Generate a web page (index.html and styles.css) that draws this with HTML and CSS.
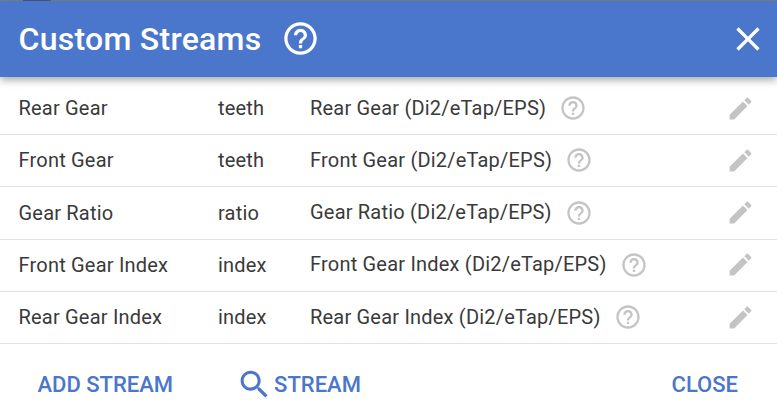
FILE: index.html
```html
<!DOCTYPE html>
<html lang="en">
<head>
  <meta charset="UTF-8">
  <title>Custom Streams</title>
  <link rel="stylesheet" href="styles.css">
</head>
<body>
  <div class="backdrop"><span class="backdrop-tab"></span></div>
  <div class="dialog">
    <header class="title-bar">
      <h1>Custom Streams</h1>
      <svg class="title-help" viewBox="0 0 24 24"><path d="M11 18h2v-2h-2v2zm1-16C6.48 2 2 6.48 2 12s4.48 10 10 10 10-4.48 10-10S17.52 2 12 2zm0 18c-4.41 0-8-3.59-8-8s3.59-8 8-8 8 3.59 8 8-3.59 8-8 8zm0-14c-2.21 0-4 1.79-4 4h2c0-1.1.9-2 2-2s2 .9 2 2c0 2-3 1.75-3 5h2c0-2.25 3-2.5 3-5 0-2.21-1.79-4-4-4z"/></svg>
      <svg class="title-close" viewBox="0 0 24 24"><path d="M19 6.41L17.59 5 12 10.59 6.41 5 5 6.41 10.59 12 5 17.59 6.41 19 12 13.41 17.59 19 19 17.59 13.41 12z"/></svg>
    </header>
    <div class="streams">
      <div class="row">
        <span>Rear Gear</span>
        <span>teeth</span>
        <span class="desc">
          <span class="desc-text">Rear Gear (Di2/eTap/EPS)</span>
          <svg class="help" viewBox="0 0 24 24"><path d="M11 18h2v-2h-2v2zm1-16C6.48 2 2 6.48 2 12s4.48 10 10 10 10-4.48 10-10S17.52 2 12 2zm0 18c-4.41 0-8-3.59-8-8s3.59-8 8-8 8 3.59 8 8-3.59 8-8 8zm0-14c-2.21 0-4 1.79-4 4h2c0-1.1.9-2 2-2s2 .9 2 2c0 2-3 1.75-3 5h2c0-2.25 3-2.5 3-5 0-2.21-1.79-4-4-4z"/></svg>
        </span>
        <svg class="edit" viewBox="0 0 24 24"><path d="M3 17.25V21h3.75L17.81 9.94l-3.75-3.75L3 17.25zM20.71 7.04c.39-.39.39-1.02 0-1.41l-2.34-2.34c-.39-.39-1.02-.39-1.41 0l-1.83 1.83 3.75 3.75 1.83-1.83z"/></svg>
      </div>
      <div class="row">
        <span>Front Gear</span>
        <span>teeth</span>
        <span class="desc">
          <span class="desc-text">Front Gear (Di2/eTap/EPS)</span>
          <svg class="help" viewBox="0 0 24 24"><path d="M11 18h2v-2h-2v2zm1-16C6.48 2 2 6.48 2 12s4.48 10 10 10 10-4.48 10-10S17.52 2 12 2zm0 18c-4.41 0-8-3.59-8-8s3.59-8 8-8 8 3.59 8 8-3.59 8-8 8zm0-14c-2.21 0-4 1.79-4 4h2c0-1.1.9-2 2-2s2 .9 2 2c0 2-3 1.75-3 5h2c0-2.25 3-2.5 3-5 0-2.21-1.79-4-4-4z"/></svg>
        </span>
        <svg class="edit" viewBox="0 0 24 24"><path d="M3 17.25V21h3.75L17.81 9.94l-3.75-3.75L3 17.25zM20.71 7.04c.39-.39.39-1.02 0-1.41l-2.34-2.34c-.39-.39-1.02-.39-1.41 0l-1.83 1.83 3.75 3.75 1.83-1.83z"/></svg>
      </div>
      <div class="row">
        <span>Gear Ratio</span>
        <span>ratio</span>
        <span class="desc">
          <span class="desc-text">Gear Ratio (Di2/eTap/EPS)</span>
          <svg class="help" viewBox="0 0 24 24"><path d="M11 18h2v-2h-2v2zm1-16C6.48 2 2 6.48 2 12s4.48 10 10 10 10-4.48 10-10S17.52 2 12 2zm0 18c-4.41 0-8-3.59-8-8s3.59-8 8-8 8 3.59 8 8-3.59 8-8 8zm0-14c-2.21 0-4 1.79-4 4h2c0-1.1.9-2 2-2s2 .9 2 2c0 2-3 1.75-3 5h2c0-2.25 3-2.5 3-5 0-2.21-1.79-4-4-4z"/></svg>
        </span>
        <svg class="edit" viewBox="0 0 24 24"><path d="M3 17.25V21h3.75L17.81 9.94l-3.75-3.75L3 17.25zM20.71 7.04c.39-.39.39-1.02 0-1.41l-2.34-2.34c-.39-.39-1.02-.39-1.41 0l-1.83 1.83 3.75 3.75 1.83-1.83z"/></svg>
      </div>
      <div class="row">
        <span>Front Gear Index</span>
        <span>index</span>
        <span class="desc">
          <span class="desc-text">Front Gear Index (Di2/eTap/EPS)</span>
          <svg class="help" viewBox="0 0 24 24"><path d="M11 18h2v-2h-2v2zm1-16C6.48 2 2 6.48 2 12s4.48 10 10 10 10-4.48 10-10S17.52 2 12 2zm0 18c-4.41 0-8-3.59-8-8s3.59-8 8-8 8 3.59 8 8-3.59 8-8 8zm0-14c-2.21 0-4 1.79-4 4h2c0-1.1.9-2 2-2s2 .9 2 2c0 2-3 1.75-3 5h2c0-2.25 3-2.5 3-5 0-2.21-1.79-4-4-4z"/></svg>
        </span>
        <svg class="edit" viewBox="0 0 24 24"><path d="M3 17.25V21h3.75L17.81 9.94l-3.75-3.75L3 17.25zM20.71 7.04c.39-.39.39-1.02 0-1.41l-2.34-2.34c-.39-.39-1.02-.39-1.41 0l-1.83 1.83 3.75 3.75 1.83-1.83z"/></svg>
      </div>
      <div class="row">
        <span>Rear Gear Index</span>
        <span>index</span>
        <span class="desc">
          <span class="desc-text">Rear Gear Index (Di2/eTap/EPS)</span>
          <svg class="help" viewBox="0 0 24 24"><path d="M11 18h2v-2h-2v2zm1-16C6.48 2 2 6.48 2 12s4.48 10 10 10 10-4.48 10-10S17.52 2 12 2zm0 18c-4.41 0-8-3.59-8-8s3.59-8 8-8 8 3.59 8 8-3.59 8-8 8zm0-14c-2.21 0-4 1.79-4 4h2c0-1.1.9-2 2-2s2 .9 2 2c0 2-3 1.75-3 5h2c0-2.25 3-2.5 3-5 0-2.21-1.79-4-4-4z"/></svg>
        </span>
        <svg class="edit" viewBox="0 0 24 24"><path d="M3 17.25V21h3.75L17.81 9.94l-3.75-3.75L3 17.25zM20.71 7.04c.39-.39.39-1.02 0-1.41l-2.34-2.34c-.39-.39-1.02-.39-1.41 0l-1.83 1.83 3.75 3.75 1.83-1.83z"/></svg>
      </div>
    </div>
    <footer class="actions">
      <a class="action add">ADD STREAM</a>
      <a class="action search">
        <svg viewBox="0 0 24 24"><path d="M15.5 14h-.79l-.28-.27C15.41 12.59 16 11.11 16 9.5 16 5.91 13.09 3 9.5 3S3 5.91 3 9.5 5.91 16 9.5 16c1.61 0 3.09-.59 4.23-1.57l.27.28v.79l5 4.99L20.49 19l-4.99-5zm-6 0C7.01 14 5 11.99 5 9.5S7.01 5 9.5 5 14 7.01 14 9.5 11.99 14 9.5 14z"/></svg>
        STREAM
      </a>
      <a class="action close">CLOSE</a>
    </footer>
  </div>
</body>
</html>
```

FILE: styles.css
```css
* {
  margin: 0;
  padding: 0;
  box-sizing: border-box;
}
body {
  font-family: Roboto, 'Liberation Sans', sans-serif;
  background: #fff;
  color: #3a3a3a;
  width: 777px;
  height: 420px;
  overflow: hidden;
}
.backdrop {
  height: 1px;
  background: #808080;
  padding-left: 23px;
  display: flex;
}
.backdrop-tab {
  width: 28px;
  background: #4a5a80;
}
.title-bar {
  position: relative;
  height: 76px;
  background: #4a76cb;
  color: #fff;
  display: flex;
  align-items: center;
  padding-left: 18.5px;
  box-shadow: 0 3px 8px rgba(0, 0, 0, 0.35);
}
.title-bar h1 {
  font-size: 32px;
  font-weight: 500;
  letter-spacing: 0.27px;
  margin-bottom: 1px;
}
.title-help {
  width: 39px;
  height: 39px;
  fill: #fff;
  margin-left: 19px;
  margin-bottom: 1px;
}
.title-close {
  width: 40px;
  height: 40px;
  fill: #fff;
  margin-left: auto;
  margin-right: 9px;
  margin-bottom: 1px;
}
.streams {
  padding-top: 5.9px;
}
.row {
  display: grid;
  grid-template-columns: 199.5px 92px 1fr 29px;
  align-items: center;
  height: 52.25px;
  padding: 0 22px 1px 18.5px;
  border-bottom: 1px solid #e0e0e0;
  font-size: 20px;
  letter-spacing: 0.2px;
}
.desc {
  display: flex;
  align-items: center;
  gap: 13px;
}
.desc-text {
  margin-bottom: 1px;
}
.help {
  width: 28px;
  height: 28px;
  fill: #c4c4c4;
}
.edit {
  width: 29px;
  height: 29px;
  fill: #c4c4c4;
}
.actions {
  display: flex;
  align-items: center;
  height: 76px;
  padding: 5px 39px 0 37.5px;
  font-size: 22px;
  font-weight: 500;
  color: #4a76cb;
}
.action {
  display: flex;
  align-items: center;
}
.search {
  margin-left: 63px;
}
.search svg {
  width: 37px;
  height: 37px;
  fill: #4a76cb;
  margin-right: 1px;
}
.close {
  margin-left: auto;
}
```
